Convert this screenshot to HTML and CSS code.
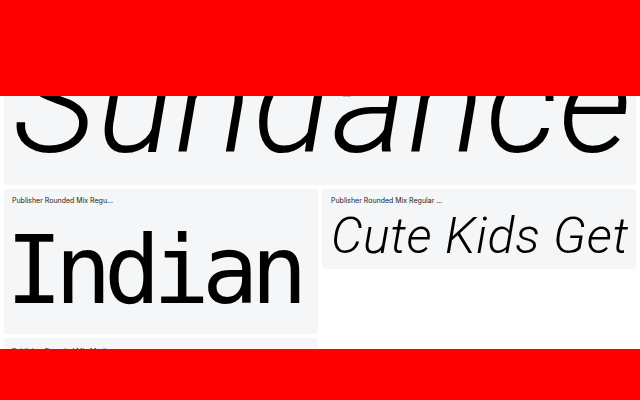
FILE: index.html
```html
<!DOCTYPE html>
<html>
<head>
<meta charset="utf-8">
<link rel="stylesheet" href="styles.css">
</head>
<body>
<div class="page">
  <div class="card card-wide">
    <div class="label">Publisher Rounded Mix Italic</div>
    <div class="sample sample-sundance">Sundance</div>
  </div>
  <div class="card card-indian">
    <div class="label">Publisher Rounded Mix Regu...</div>
    <div class="sample sample-indian">Indian</div>
  </div>
  <div class="card card-cute">
    <div class="label">Publisher Rounded Mix Regular ...</div>
    <div class="sample sample-cute">Cute Kids Get</div>
  </div>
  <div class="card card-next">
    <div class="label">Publisher Rounded Mix Medium</div>
  </div>
</div>
<div class="bar bar-top"></div>
<div class="bar bar-bottom"></div>
</body>
</html>
```
FILE: styles.css
```css
html, body {
  margin: 0;
  padding: 0;
  background: #ffffff;
  overflow: hidden;
}
body {
  width: 640px;
  height: 400px;
  position: relative;
  font-family: "Inter", "Liberation Sans", sans-serif;
}
.page {
  height: 400px;
  box-sizing: border-box;
  overflow: hidden;
  padding: 4px;
  display: grid;
  grid-template-columns: 314px 314px;
  grid-template-rows: 181px 145px 50px;
  column-gap: 4px;
  row-gap: 4px;
  align-items: start;
}
.card {
  background: #f4f6f7;
  border-radius: 3px;
  padding: 7px 8px 0 8px;
  overflow: hidden;
  box-sizing: border-box;
}
.card-wide {
  grid-column: 1 / 3;
  height: 181px;
  display: flex;
  flex-direction: column;
  justify-content: flex-end;
}
.card-wide .label { margin-bottom: auto; }
.card-indian { height: 145px; }
.card-cute { height: 80px; padding-left: 9px; }
.card-next { height: 50px; padding-top: 9px; }
.label {
  font-size: 7px;
  line-height: 9px;
  color: #222;
  white-space: nowrap;
}
.sample {
  color: #000;
  white-space: nowrap;
}
.sample-sundance {
  font-family: "Roboto", sans-serif;
  font-style: italic;
  font-weight: 300;
  font-size: 144px;
  line-height: 110px;
  margin-bottom: 27px;
  margin-left: 1px;
  letter-spacing: 1.2px;
}
.sample-indian {
  font-family: "DejaVu Sans Mono", monospace;
  font-size: 94px;
  line-height: 100px;
  letter-spacing: -7.6px;
  margin-top: 16px;
  margin-left: -6px;
}
.sample-cute {
  font-family: "Roboto", sans-serif;
  font-style: italic;
  font-weight: 300;
  font-size: 50px;
  line-height: 50px;
  margin-top: 6px;
  letter-spacing: 0.6px;
}
.bar {
  position: absolute;
  left: 0;
  width: 640px;
  background: #ff0000;
}
.bar-top { top: 0; height: 96px; }
.bar-bottom { top: 349px; height: 51px; }
```
